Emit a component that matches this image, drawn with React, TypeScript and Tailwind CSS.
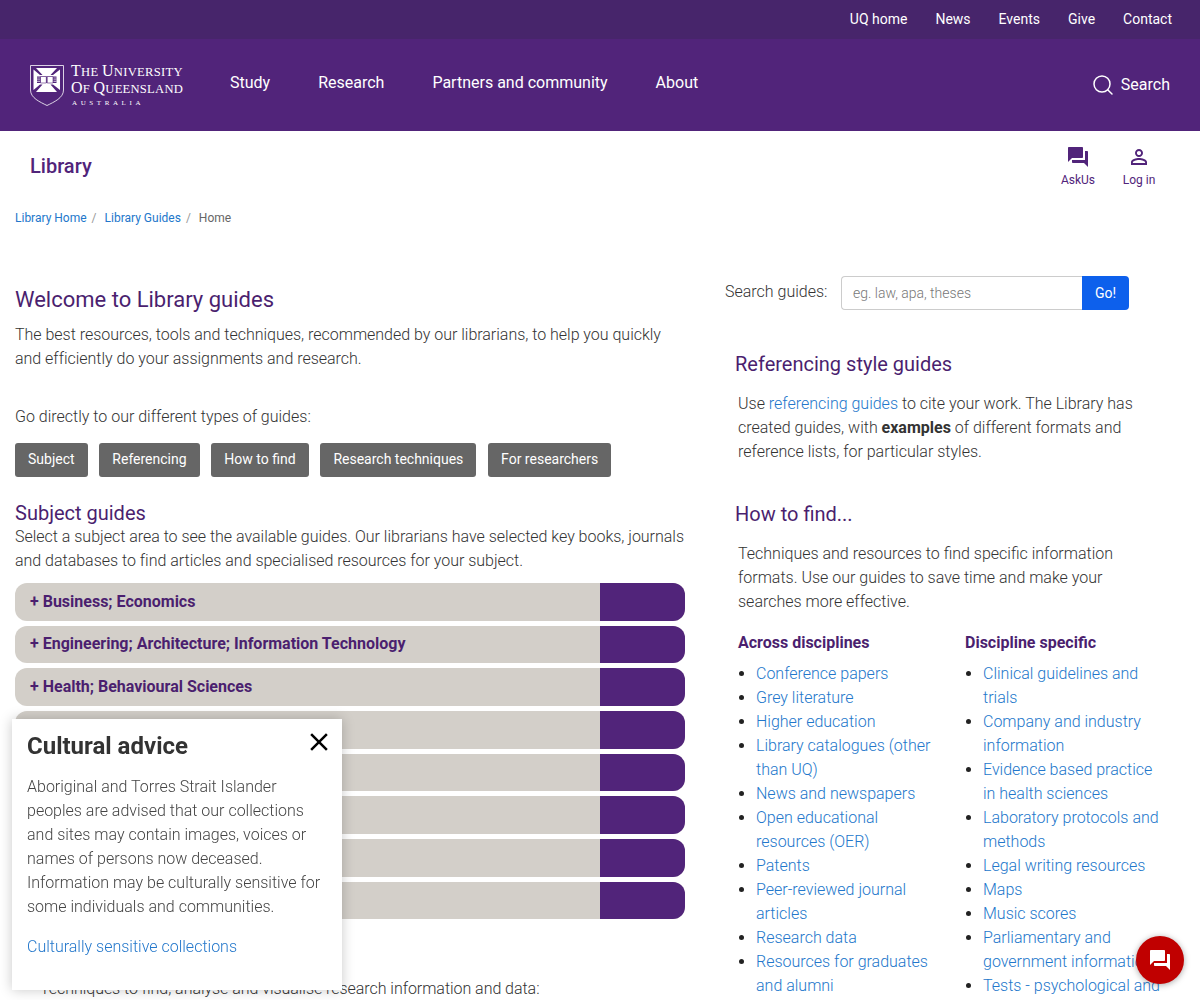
import React from "react";
import { Search } from "lucide-react";

const chat = "M21 6h-2v9H6v2c0 .55.45 1 1 1h11l4 4V7c0-.55-.45-1-1-1zm-4 6V3c0-.55-.45-1-1-1H3c-.55 0-1 .45-1 1v14l4-4h10c.55 0 1-.45 1-1z";
const person = "M12 5.9c1.16 0 2.1.94 2.1 2.1s-.94 2.1-2.1 2.1S9.9 9.16 9.9 8s.94-2.1 2.1-2.1m0 9c2.97 0 6.1 1.46 6.1 2.1v1.1H5.9V17c0-.64 3.13-2.1 6.1-2.1M12 4C9.79 4 8 5.79 8 8s1.79 4 4 4 4-1.79 4-4-1.79-4-4-4zm0 9c-2.67 0-8 1.34-8 4v3h16v-3c0-2.66-5.33-4-8-4z";

function Logo() {
  return (
    <div className="flex items-start">
      <svg width="34" height="41" viewBox="0 0 34 41">
        <path d="M0.5 0.5H33.5V25C33.5 33 24 37 17 40.5C10 37 0.5 33 0.5 25Z" fill="none" stroke="#fff" strokeWidth="0.8" />
        <path d="M6 3H27L20.5 10H23L30 4.5V25L23 19.5H20.5L27 27H6L12.5 19.5H10L3.5 25V4.5L10 10H12.5Z" fill="#fff" />
        <path d="M7 11.5H26.5V18H7Z" fill="#51247a" />
        <path d="M10.5 11.5H16.3V18H10.5ZM17.2 11.5H23V18H17.2Z" fill="#fff" stroke="#51247a" strokeWidth="0.6" />
        <path d="M7 13H10M7 14.8H10M7 16.5H10M23.5 13H26.5M23.5 14.8H26.5M23.5 16.5H26.5" stroke="#fff" strokeWidth="0.6" />
      </svg>
      <div className="ml-[7px] font-['Liberation_Serif',serif] text-white leading-none">
        <div className="text-[12.6px] h-[17px] leading-[16px] mt-[-2px] tracking-[0.3px] whitespace-nowrap">
          <span className="text-[16px]">T</span>HE <span className="text-[16px]">U</span>NIVERSITY
        </div>
        <div className="text-[12.6px] h-[16px] leading-[16px] tracking-[0.25px] whitespace-nowrap">
          <span className="text-[16px]">O</span>F <span className="text-[16px]">Q</span>UEENSLAND
        </div>
        <div className="text-[7px] h-[8px] leading-[8px] mt-[3px] ml-[1px] tracking-[3.6px] whitespace-nowrap">AUSTRALIA</div>
      </div>
    </div>
  );
}

function A({ children }: { children: React.ReactNode }) {
  return <a href="#" className="text-[#2377cb]">{children}</a>;
}

const across = [
  "Conference papers",
  "Grey literature",
  "Higher education",
  "Library catalogues (other than UQ)",
  "News and newspapers",
  "Open educational resources (OER)",
  "Patents",
  "Peer-reviewed journal articles",
  "Research data",
  "Resources for graduates and alumni",
];
const specific = [
  "Clinical guidelines and trials",
  "Company and industry information",
  "Evidence based practice in health sciences",
  "Laboratory protocols and methods",
  "Legal writing resources",
  "Maps",
  "Music scores",
  "Parliamentary and government information",
  "Tests - psychological and",
];
const subjects = [
  "+ Business; Economics",
  "+ Engineering; Architecture; Information Technology",
  "+ Health; Behavioural Sciences",
  "", "", "", "", "",
];

function LinkList({ items }: { items: string[] }) {
  return (
    <ul className="list-disc pl-[18px] mt-[7px] marker:text-[#222]">
      {items.map((t) => (
        <li key={t}><A>{t}</A></li>
      ))}
    </ul>
  );
}

export default function App() {
  return (
    <div className="relative h-[1000px] overflow-hidden bg-white font-['Roboto',sans-serif] text-[16px] font-light leading-[24px] text-[#333]">
      <div className="h-[39px] bg-[#47256b] flex items-start pt-[9px] leading-[20px] justify-end gap-[28px] pr-[28px] text-[14px] font-normal text-white">
        <a href="#">UQ home</a>
        <a href="#">News</a>
        <a href="#">Events</a>
        <a href="#">Give</a>
        <a href="#">Contact</a>
      </div>

      <header className="h-[92px] bg-[#51247a] flex items-start pl-[30px] pr-[30px] text-white">
        <div className="w-[200px] pt-[26px] shrink-0"><Logo /></div>
        <nav className="flex gap-[48px] pt-[32px] text-[16px] font-normal">
          <a href="#">Study</a>
          <a href="#">Research</a>
          <a href="#">Partners and community</a>
          <a href="#">About</a>
        </nav>
        <div className="ml-auto flex items-center gap-[6px] pt-[34px] text-[16px] font-normal">
          <Search size={24} strokeWidth={1.5} />
          <span>Search</span>
        </div>
      </header>

      <div className="h-[78px] flex items-start pl-[30px] pr-[31px]">
        <div className="pt-[23px] text-[20px] font-medium text-[#51247a]">Library</div>
        <div className="ml-auto flex pt-[14px] text-[12px] leading-[16px] font-normal text-[#51247a]">
          <div className="flex flex-col items-center w-[60px]">
            <svg width="24" height="24" viewBox="0 0 24 24" fill="#51247a"><path d={chat} /></svg>
            <span className="mt-[3px]">AskUs</span>
          </div>
          <div className="flex flex-col items-center w-[60px] ml-[1px]">
            <svg width="24" height="24" viewBox="0 0 24 24" fill="#51247a"><path d={person} /></svg>
            <span className="mt-[3px]">Log in</span>
          </div>
        </div>
      </div>

      <div className="pl-[15px] h-[33px] text-[12px] leading-[18px] font-normal flex text-[#666]">
        <a href="#" className="text-[#2377cb]">Library Home</a><span className="text-[#999] ml-[5px] mr-[8px]">/</span>
        <a href="#" className="text-[#2377cb]">Library Guides</a><span className="text-[#999] ml-[5px] mr-[8px]">/</span>
        <span>Home</span>
      </div>

      <main className="flex pl-[15px] pt-[42px]">
        <section className="w-[670px] shrink-0">
          <h1 className="text-[22px] leading-[30px] font-normal text-[#4b1f6f] pt-[1px]">Welcome to Library guides</h1>
          <p className="mt-[8px] tracking-[-0.015px]">The best resources, tools and techniques, recommended by our librarians, to help you quickly and efficiently do your assignments and research.</p>
          <p className="mt-[34px]">Go directly to our different types of guides:</p>
          <div className="flex gap-[11.75px] mt-[14px] text-[14px] font-normal text-white">
            {["Subject", "Referencing", "How to find", "Research techniques", "For researchers"].map((b) => (
              <a key={b} href="#" className="h-[34px] px-[13px] pb-[2px] flex items-center rounded-[3px] bg-[#666]">{b}</a>
            ))}
          </div>
          <h2 className="text-[20px] leading-[24px] font-normal text-[#4b1f6f] mt-[24px]">Subject guides</h2>
          <p className="w-[674px] tracking-[-0.015px]">Select a subject area to see the available guides. Our librarians have selected key books, journals and databases to find articles and specialised resources for your subject.</p>
          <div className="mt-[10px]">
            {subjects.map((s, i) => (
              <div key={i} className="flex h-[37.67px] mb-[5px] rounded-[12px] overflow-hidden bg-[#d3cfc9]">
                <div className="flex-1 pl-[15px] flex items-center font-bold text-[#4b1f6f]">{s}</div>
                <div className="w-[85px] bg-[#51247a]" />
              </div>
            ))}
          </div>
          <p className="mt-[58px] pl-[25px] whitespace-nowrap tracking-[-0.04px]">Techniques to find, analyse and visualise research information and data:</p>
        </section>

        <aside className="ml-[40px] w-[445px] shrink-0">
          <div className="flex items-center h-[34px] -mt-[8px]">
            <span className="w-[116px] mb-[2px]">Search guides:</span>
            <div className="w-[241px] h-[34px] border border-[#ccc] border-r-0 rounded-l-[4px] pl-[11px] flex items-center text-[14px] text-[#777] font-light">eg. law, apa, theses</div>
            <button className="w-[47px] h-[34px] bg-[#0d60ec] text-white text-[14px] font-normal rounded-r-[4px]">Go!</button>
          </div>
          <div className="pl-[10px]">
            <h2 className="text-[20px] leading-[28px] font-normal text-[#4b1f6f] mt-[40px]">Referencing style guides</h2>
            <p className="pl-[3px] mt-[14px] w-[410px]">Use <A>referencing guides</A> to cite your work. The Library has created guides, with <strong className="font-bold">examples</strong> of different formats and reference lists, for particular styles.</p>
            <h2 className="text-[20px] leading-[28px] font-normal text-[#4b1f6f] mt-[36px]">How to find...</h2>
            <p className="pl-[3px] mt-[14px] w-[410px]">Techniques and resources to find specific information formats. Use our guides to save time and make your searches more effective.</p>
            <div className="flex pl-[3px] mt-[17px]">
              <div className="w-[227px] pr-[30px] shrink-0">
                <h3 className="font-bold text-[#4b1f6f]">Across disciplines</h3>
                <LinkList items={across} />
              </div>
              <div className="w-[200px] shrink-0">
                <h3 className="font-bold text-[#4b1f6f]">Discipline specific</h3>
                <LinkList items={specific} />
              </div>
            </div>
          </div>
        </aside>
      </main>

      <div className="fixed left-[12px] top-[719px] w-[330px] h-[271px] bg-white shadow-[0_0_12px_rgba(0,0,0,0.22)] px-[15px] pt-[12px]">
        <div className="flex items-start justify-between">
          <div className="text-[24px] leading-[30px] font-bold text-[#333]">Cultural advice</div>
          <svg width="30" height="30" viewBox="0 0 24 24" fill="#000" className="-mt-[4px] -mr-[7px]"><path d="M19 6.41L17.59 5 12 10.59 6.41 5 5 6.41 10.59 12 5 17.59 6.41 19 12 13.41 17.59 19 19 17.59 13.41 12z" /></svg>
        </div>
        <p className="mt-[14px] text-[#444]">Aboriginal and Torres Strait Islander peoples are advised that our collections and sites may contain images, voices or names of persons now deceased. Information may be culturally sensitive for some individuals and communities.</p>
        <p className="mt-[16px]"><A>Culturally sensitive collections</A></p>
      </div>

      <div className="fixed left-[1136px] top-[936px] w-[48px] h-[48px] rounded-full bg-[#c00000] shadow-[0_1px_6px_rgba(0,0,0,0.35)] flex items-center justify-center">
        <svg width="24" height="24" viewBox="0 0 24 24" fill="#fff"><path d={chat} /></svg>
      </div>
    </div>
  );
}
